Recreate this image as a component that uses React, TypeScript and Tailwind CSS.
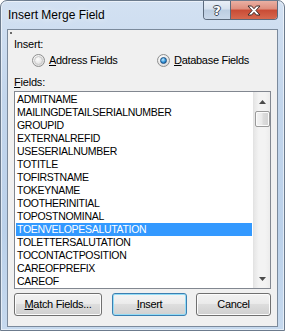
import React from "react";

const FONT = "font-['Liberation_Sans',Arial,sans-serif]";

const FIELDS = [
  "ADMITNAME",
  "MAILINGDETAILSERIALNUMBER",
  "GROUPID",
  "EXTERNALREFID",
  "USESERIALNUMBER",
  "TOTITLE",
  "TOFIRSTNAME",
  "TOKEYNAME",
  "TOOTHERINITIAL",
  "TOPOSTNOMINAL",
  "TOENVELOPESALUTATION",
  "TOLETTERSALUTATION",
  "TOCONTACTPOSITION",
  "CAREOFPREFIX",
  "CAREOF",
];

function Radio({ checked }: { checked?: boolean }) {
  return (
    <span className="flex h-[13px] w-[13px] shrink-0 items-center justify-center rounded-full border border-[#8e8f8f] bg-[radial-gradient(circle_at_35%_30%,#ffffff,#d4d4d4)]">
      {checked ? (
        <span className="h-[7px] w-[7px] rounded-full border border-[#1d4f80] bg-[radial-gradient(circle_at_40%_35%,#c4ecff,#2f93da_55%,#0c4f8f)]" />
      ) : (
        <span className="h-[9px] w-[9px] rounded-full border border-[#c8c8c8] bg-[radial-gradient(circle_at_40%_35%,#fdfdfd,#d9d9d9)]" />
      )}
    </span>
  );
}

function Arrow({ up }: { up?: boolean }) {
  return (
    <svg width="7" height="4" viewBox="0 0 7 4">
      {up ? (
        <polygon points="3.5,0 7,4 0,4" fill="#4b4b4b" />
      ) : (
        <polygon points="0,0 7,0 3.5,4" fill="#4b4b4b" />
      )}
    </svg>
  );
}

function Btn({
  children,
  w,
  def,
}: {
  children: React.ReactNode;
  w: string;
  def?: boolean;
}) {
  return (
    <div
      className={
        def
          ? `flex h-[23px] ${w} items-center justify-center rounded-[3px] border border-[#3c7fb1] bg-[linear-gradient(#f4f4f4,#ececec_45%,#dedede_50%,#d0d0d0)] shadow-[inset_0_0_0_1px_#94dcf6] text-[11px] tracking-[-0.3px] text-black`
          : `flex h-[23px] ${w} items-center justify-center rounded-[3px] border border-[#707070] bg-[linear-gradient(#f2f2f2,#ebebeb_45%,#dddddd_50%,#cfcfcf)] shadow-[inset_0_0_0_1px_#fcfcfc] text-[11px] tracking-[-0.3px] text-black`
      }
    >
      {children}
    </div>
  );
}

export default function App() {
  return (
    <div
      className={`${FONT} flex h-[331px] w-[285px] flex-col overflow-hidden rounded-t-[7px] border border-[#6c7b8d] bg-[linear-gradient(#d3e1f2,#c3d6ec_30%,#bbd1ea_70%,#c6d9ee)] shadow-[inset_0_0_0_1px_rgba(255,255,255,0.55)]`}
    >
      {/* Title bar */}
      <div className="flex h-[28px] shrink-0 items-start justify-between pr-[6px]">
        <div className="pl-[7px] pt-[7px] text-[12px] leading-[15px] text-black [text-shadow:0_0_6px_rgba(255,255,255,0.9)]">
          Insert Merge Field
        </div>
        <div className="flex h-[19px] overflow-hidden rounded-b-[4px] border border-t-0 border-[#5c6a7c]">
          <div className="flex w-[27px] items-center justify-center border-r border-[#5c6a7c] bg-[linear-gradient(#e9eff7,#d6e1ee_45%,#bccde1_50%,#c9d8ea)]">
            <span className="font-['DejaVu_Sans',sans-serif] text-[13px] font-bold leading-none text-white [text-shadow:1px_0_#3e4a58,-1px_0_#3e4a58,0_1px_#3e4a58,0_-1px_#3e4a58]">
              ?
            </span>
          </div>
          <div className="flex w-[46px] items-center justify-center bg-[linear-gradient(#eab0a3,#de8d7c_45%,#c94b35_50%,#d6694f)]">
            <svg width="14" height="11" viewBox="-1 -1 14 11">
              <polygon
                points="0,0 3.6,0 6,2.7 8.4,0 12,0 7.9,4.5 12,9 8.4,9 6,6.3 3.6,9 0,9 4.1,4.5"
                fill="#ffffff"
                stroke="#3b2a28"
                strokeWidth="1"
                strokeLinejoin="round"
              />
            </svg>
          </div>
        </div>
      </div>

      {/* Client area */}
      <div className="relative mx-[6px] mb-[3px] flex h-[298px] flex-col border border-[#7b8a9c] bg-[#f0f0f0] px-[6px] pb-[10px] pt-[8px] text-black">
        <span className="absolute left-[2px] top-[2px] h-[2px] w-[2px] bg-[#6a6a6a]" />
        <div className="h-[13px] text-[11px] leading-[13px] tracking-[-0.2px]">Insert:</div>
        <div className="mt-[3px] flex h-[13px] items-center text-[11px] leading-[13px] tracking-[-0.3px]">
          <div className="ml-[18px] flex w-[125px] items-center gap-[4px]">
            <Radio />
            <span>
              <u className="underline-offset-[1px]">A</u>ddress Fields
            </span>
          </div>
          <div className="flex items-center gap-[4px]">
            <Radio checked />
            <span>
              <u className="underline-offset-[1px]">D</u>atabase Fields
            </span>
          </div>
        </div>
        <div className="mt-[9px] h-[13px] text-[11px] leading-[13px] tracking-[-0.2px]">
          <u className="underline-offset-[1px]">F</u>ields:
        </div>

        {/* List box */}
        <div className="mt-[2px] flex h-[198px] border border-[#828790] bg-white">
          <div className="flex flex-1 flex-col px-[1px] pt-[1px]">
            {FIELDS.map((f) => (
              <div
                key={f}
                className={
                  f === "TOENVELOPESALUTATION"
                    ? "h-[13px] bg-[#3399ff] pl-[1px] text-[10.5px] leading-[13px] tracking-[-0.3px] text-white"
                    : "h-[13px] pl-[1px] text-[10.5px] leading-[13px] tracking-[-0.3px] text-black"
                }
              >
                {f}
              </div>
            ))}
          </div>
          {/* Scrollbar */}
          <div className="flex w-[17px] flex-col border-l border-[#e3e3e3] bg-[linear-gradient(90deg,#e6e6e6,#f3f3f3_30%,#f3f3f3_70%,#ececec)]">
            <div className="flex h-[17px] items-center justify-center pt-[3px]">
              <Arrow up />
            </div>
            <div className="flex flex-1 flex-col items-center pt-[2px]">
              <div className="flex h-[16px] w-[15px] items-center justify-center rounded-[2px] border border-[#9a9a9a] bg-[linear-gradient(90deg,#f3f3f3,#eaeaea_45%,#dcdcdc_55%,#d2d2d2)] shadow-[inset_0_0_0_1px_#fbfbfb]" />
            </div>
            <div className="flex h-[17px] items-center justify-center pb-[2px]">
              <Arrow />
            </div>
          </div>
        </div>

        {/* Buttons */}
        <div className="mt-[4px] flex">
          <Btn w="w-[88px]">
            <span>
              <u className="underline-offset-[1px]">M</u>atch Fields...
            </span>
          </Btn>
          <div className="ml-[10px]">
            <Btn w="w-[75px]" def>
              <span>
                <u className="underline-offset-[1px]">I</u>nsert
              </span>
            </Btn>
          </div>
          <div className="ml-[9px]">
            <Btn w="w-[75px]">
              <span>Cancel</span>
            </Btn>
          </div>
        </div>
      </div>
    </div>
  );
}
